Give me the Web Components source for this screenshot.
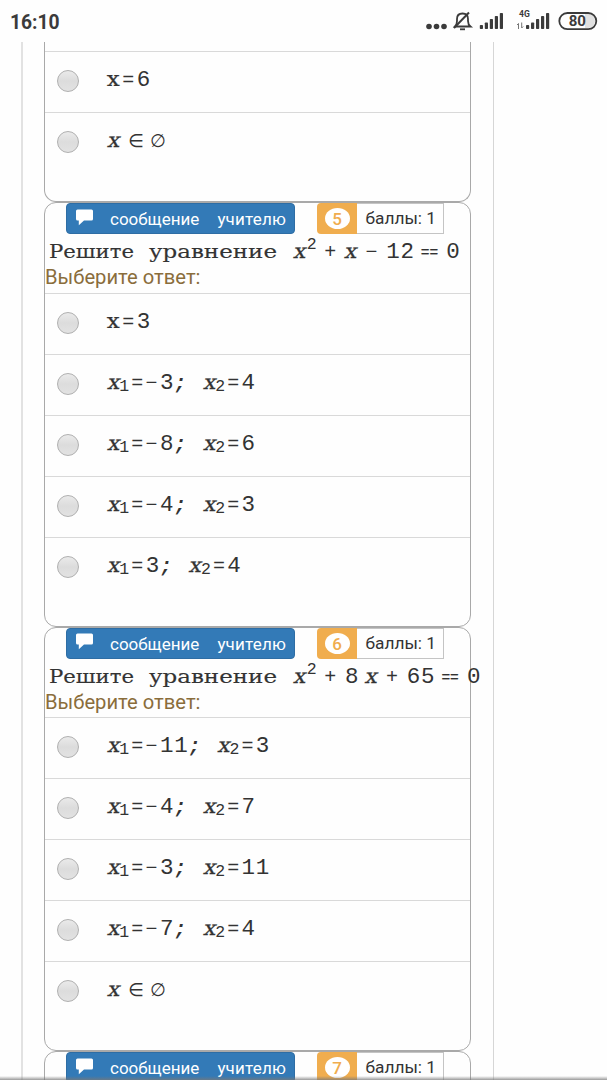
<!DOCTYPE html>
<html lang="ru">
<head>
<meta charset="utf-8">
<title>Тест</title>
<style>
  body {
    margin: 0;
    background: #fefefe;
    font-family: Roboto, "Liberation Sans", sans-serif;
    overflow: hidden;
  }
</style>
</head>
<body>
<quiz-screen>
  <status-bar slot="status" time="16:10" battery="80"></status-bar>

  <question-card class="first">
    <answer-option formula="x=6" upright></answer-option>
    <answer-option formula="x ∈ ∅"></answer-option>
  </question-card>

  <question-card number="5" points="1" formula="x^2 + x − 12 ≡ 0">
    <answer-option formula="x=3" upright></answer-option>
    <answer-option formula="x_1=−3;  x_2=4"></answer-option>
    <answer-option formula="x_1=−8;  x_2=6"></answer-option>
    <answer-option formula="x_1=−4;  x_2=3"></answer-option>
    <answer-option formula="x_1=3;  x_2=4"></answer-option>
  </question-card>

  <question-card number="6" points="1" formula="x^2 + 8 x + 65 ≡ 0">
    <answer-option formula="x_1=−11;  x_2=3"></answer-option>
    <answer-option formula="x_1=−4;  x_2=7"></answer-option>
    <answer-option formula="x_1=−3;  x_2=11"></answer-option>
    <answer-option formula="x_1=−7;  x_2=4"></answer-option>
    <answer-option formula="x ∈ ∅"></answer-option>
  </question-card>

  <question-card number="7" points="1"></question-card>
</quiz-screen>

<script>
  // Formula: _n is an index, ^n a power, ≡ the double equals sign
  function formulaText(source, start, baseline, space, upright) {
    const out = [];
    let c = start;
    const put = (cls, x, y, t) => {
      // the slanted x is the upright slab letter, skewed and widened
      let place = `x="${x.toFixed(1)}" y="${y}"`;
      if (cls === 'x italic') {
        place = `transform="translate(${(x - 1).toFixed(1)} ${y}) skewX(-13) scale(1.08 1)"`;
      } else if (cls === 'x') {
        place = `transform="translate(${(x - 0.7).toFixed(1)} ${y}) scale(1.12 1)"`;
      }
      out.push(`<text class="${cls}" ${place}>${t}</text>`);
    };

    for (let i = 0; i < source.length; i++) {
      const ch = source[i];
      if (ch === ' ') {
        c += space;
      } else if (ch === '_') {
        put('small', c - 4, baseline + 2.5, source[++i]);
        c += 9;
      } else if (ch === '^') {
        put('small', c - 2.5, baseline - 9.5, source[++i]);
        c += 9.7;
      } else if (ch === '≡') {
        put('double', c + 2.5, baseline - 1.5, '==');
        c += 19;
      } else {
        let cls = 'digit';
        if (ch === 'x') cls = upright ? 'x' : 'x italic';
        if (ch === '=' || ch === '+' || ch === '−') cls = 'sign';
        if (ch === ';') cls = 'semi';
        if (ch === '∈' || ch === '∅') cls = 'set';
        put(cls, c + (cls === 'digit' ? 0.8 : 0), baseline, ch);
        c += 14.3;
      }
    }
    return out.join('');
  }

  const formulaStyle = `
    svg { display: block; overflow: visible; }
    text { font: 22.5px "Liberation Mono", monospace; fill: #333; text-anchor: middle; }
    .x { font: 20.5px "DejaVu Serif", serif; stroke: #333; stroke-width: 0.25; }
    .small { font-size: 16.5px; }
    .sign { font-size: 20px; }
    .semi { font-weight: bold; font-style: italic; font-size: 20px; }
    .set { font: 18px "DejaVu Sans", sans-serif; }
    .double { font-size: 14.5px; stroke: #333; stroke-width: 0.25; }
    .word { font: 18px "DejaVu Serif", serif; text-anchor: start; stroke: #333; stroke-width: 0.15; }
  `;

  class QuizScreen extends HTMLElement {
    constructor() {
      super();
      const shadow = this.attachShadow({ mode: 'open' });
      shadow.innerHTML = `
        <style>
          :host {
            display: flex;
            flex-direction: column;
            width: 607px;
            height: 1080px;
            overflow: hidden;
            position: relative;
          }
          .page {
            box-sizing: border-box;
            flex: 1;
            min-height: 0;
            width: 473px;
            margin-left: 21px;
            padding-left: 21px;
            border-left: 2px solid #e2e2e2;
            border-right: 1px solid #d6d6d6;
          }
          .edge {
            position: absolute;
            left: 0;
            right: 0;
            bottom: 0;
            height: 4px;
            background: linear-gradient(rgba(120,120,120,0), rgba(120,120,120,0.75));
          }
        </style>
        <slot name="status"></slot>
        <div class="page"><slot></slot></div>
        <div class="edge"></div>
      `;
    }
  }

  class StatusBar extends HTMLElement {
    constructor() {
      super();
      const shadow = this.attachShadow({ mode: 'open' });
      const bars = (x) => [0, 1, 2, 3, 4].map((n) => {
        const h = [4, 6.5, 10, 13, 16][n];
        return `<rect x="${x + n * 5}" y="${29 - h}" width="3.2" height="${h}" rx="0.8"/>`;
      }).join('');
      shadow.innerHTML = `
        <style>
          :host {
            display: flex;
            flex: none;
            justify-content: space-between;
            height: 42px;
            color: #3b3b3b;
          }
          .time {
            padding-left: 10px;
            font-size: 19.3px;
            font-weight: 700;
            line-height: 45px;
          }
          svg { display: block; fill: #3b3b3b; }
          text { font-family: Roboto, sans-serif; font-weight: 700; text-anchor: middle; }
        </style>
        <span class="time">${this.getAttribute('time')}</span>
        <svg width="187" height="42" viewBox="420 0 187 42">
          <circle cx="429" cy="26.5" r="2.8"/>
          <circle cx="436.5" cy="26.5" r="2.8"/>
          <circle cx="444" cy="26.5" r="2.8"/>
          <g fill="none" stroke="#3b3b3b" stroke-width="1.8">
            <path d="M455 26.5 Q457 24.5 457 21 V19 Q457 13.5 462.5 13.5 Q468 13.5 468 19 V21 Q468 24.5 470.5 26.5 Z"/>
            <path d="M454 28 L469 12.5" stroke-width="2"/>
            <path d="M460 29.3 H465"/>
          </g>
          ${bars(479.8)}
          ${bars(526)}
          <text x="524.5" y="17" font-size="8.6">4G</text>
          <path d="M518.5 29 V23.5 L517 25 M521.7 22.5 V28 L523.2 26.5" fill="none" stroke="#777" stroke-width="1"/>
          <path d="M585 14 h3 a7 7 0 0 1 0 14 h-3 Z" fill="#e1e1e1"/>
          <rect x="559.3" y="13" width="37" height="16.2" rx="8.1" fill="none" stroke="#3b3b3b" stroke-width="1.8"/>
          <text x="577.3" y="26.4" font-size="15">${this.getAttribute('battery')}</text>
        </svg>
      `;
    }
  }

  class QuestionCard extends HTMLElement {
    constructor() {
      super();
      const shadow = this.attachShadow({ mode: 'open' });
      const number = this.getAttribute('number');
      const formula = this.getAttribute('formula');
      shadow.innerHTML = `
        <style>
          :host {
            display: block;
            box-sizing: border-box;
            width: 427px;
            height: 424.5px;
            border: 1px solid #a9a9a9;
            border-radius: 12px;
          }
          :host(.first) {
            height: 160px;
            padding-top: 9px;
            border-top: none;
            border-radius: 0 0 12px 12px;
          }
          ${formulaStyle}
          header {
            display: flex;
            height: 31px;
            margin-left: 21px;
          }
          button {
            display: flex;
            align-items: center;
            box-sizing: border-box;
            width: 229px;
            height: 31px;
            margin: 0 22px 0 0;
            padding: 1px 0 0 8.5px;
            border: 1px solid #2e6da4;
            border-radius: 4px;
            background: #337ab7;
            color: #fff;
            font: 17px Roboto, sans-serif;
            white-space: nowrap;
          }
          button svg { flex: none; margin: -4px 17.5px 0 0; }
          button span + span { margin-left: 18px; letter-spacing: 0.2px; }
          .number {
            display: flex;
            align-items: center;
            justify-content: center;
            width: 40px;
            height: 31px;
            border-radius: 4px 0 0 4px;
            background: #f0ad4e;
          }
          .number b {
            width: 25px;
            height: 21px;
            border-radius: 12.5px / 10.5px;
            background: #fff;
            color: #f0ad4e;
            font-size: 17px;
            font-weight: 500;
            line-height: 22px;
            text-align: center;
          }
          .points {
            box-sizing: border-box;
            width: 87px;
            height: 31px;
            padding-left: 8.5px;
            border: 1px solid #c4c4c4;
            border-left: none;
            color: #333;
            font-size: 17.3px;
            line-height: 29px;
            white-space: nowrap;
          }
          .label {
            height: 27.5px;
            color: #8a6d3b;
            font-size: 20.2px;
            line-height: 25px;
          }
        </style>
        ${number ? `
        <header>
          <button>
            <svg width="17" height="17" viewBox="0 0 17 17" fill="#fff">
              <path d="M1.5 0.5 H15.5 Q17 0.5 17 2 V10 Q17 11.5 15.5 11.5 H8 L2.8 16.3 V11.5 H1.5 Q0 11.5 0 10 V2 Q0 0.5 1.5 0.5 Z"/>
            </svg>
            <span>сообщение</span><span>учителю</span>
          </button>
          <span class="number"><b>${number}</b></span>
          <span class="points">баллы: ${this.getAttribute('points')}</span>
        </header>` : ''}
        ${formula ? `
        <svg width="425" height="31">
          <text class="word" x="4" y="24" textLength="85" lengthAdjust="spacingAndGlyphs">Решите</text>
          <text class="word" x="104" y="24" textLength="128" lengthAdjust="spacingAndGlyphs">уравнение</text>
          ${formulaText(formula, 255, 24, 6.3)}
        </svg>
        <div class="label">Выберите ответ:</div>` : ''}
        <slot></slot>
      `;
    }
  }

  class AnswerOption extends HTMLElement {
    constructor() {
      super();
      const shadow = this.attachShadow({ mode: 'open' });
      shadow.innerHTML = `
        <style>
          :host {
            display: flex;
            align-items: center;
            box-sizing: border-box;
            height: 61px;
            padding: 0 0 2px 12px;
            border-top: 1px solid #d9d9d9;
          }
          ${formulaStyle}
          .radio {
            box-sizing: border-box;
            width: 22px;
            height: 22px;
            margin-right: 27px;
            border: 1px solid #b0b0b0;
            border-radius: 50%;
            background: linear-gradient(#eaeaea, #dcdcdc 50%, #e2e2e2);
          }
        </style>
        <span class="radio"></span>
        <svg width="180" height="58">
          ${formulaText(this.getAttribute('formula'), 8, 33.5, 7.7, this.hasAttribute('upright'))}
        </svg>
      `;
    }
  }

  customElements.define('quiz-screen', QuizScreen);
  customElements.define('status-bar', StatusBar);
  customElements.define('question-card', QuestionCard);
  customElements.define('answer-option', AnswerOption);
</script>
</body>
</html>
